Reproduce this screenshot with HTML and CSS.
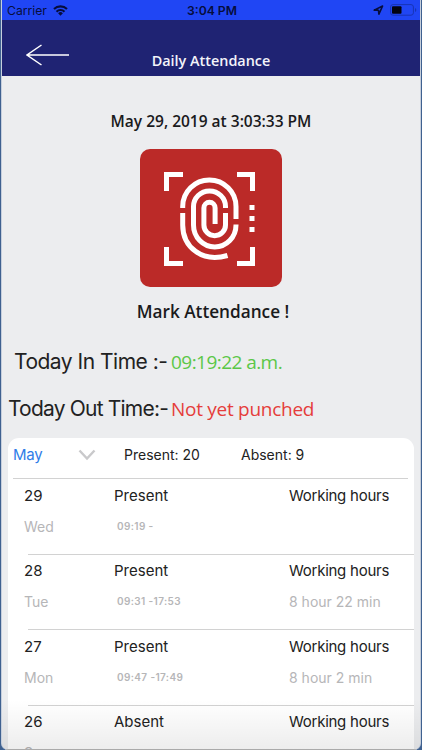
FILE: index.html
```html
<!DOCTYPE html>
<html lang="en">
<head>
  <meta charset="UTF-8">
  <meta name="viewport" content="width=device-width, initial-scale=1.0">
  <title>Daily Attendance</title>
  <link rel="stylesheet" href="styles.css">
</head>
<body>
  <div class="phone">
    <div class="statusbar">
      <div class="carrier">
        <span>Carrier</span>
        <svg width="15" height="11" viewBox="0 0 15 11">
          <path d="M1 4.100a9.200 9.200 0 0 1 13 0M3.500 6.700a5.700 5.700 0 0 1 8 0" fill="none" stroke="#060d3c" stroke-width="2.100"/>
          <path d="M5.100 8.300a3.400 3.400 0 0 1 4.800 0L7.500 10.800z" fill="#060d3c"/>
        </svg>
      </div>
      <div class="clock">3:04 PM</div>
      <div class="battery">
        <svg width="11" height="10" viewBox="0 0 11 10">
          <path d="M1.200 5.100L9.600 1 5.900 9.100 5.500 5.300z" fill="none" stroke="#060d3c" stroke-width="1.600" stroke-linejoin="round"/>
        </svg>
        <svg width="27" height="12" viewBox="0 0 27 12">
          <rect x=".6" y=".6" width="22.800" height="10.600" rx="2.400" fill="none" stroke="#1734b5"/>
          <rect x="2" y="2.200" width="9.500" height="7.600" rx="1" fill="#02030f"/>
          <path d="M25 4v4q1.300-.7 1.300-2T25 4" fill="#1734b5"/>
        </svg>
      </div>
    </div>

    <div class="header">
      <svg class="back" width="44" height="22" viewBox="0 0 44 22">
        <path d="M43 11H1M15.500 1L1 11l14.500 10" fill="none" stroke="#fff" stroke-width="1.500"/>
      </svg>
      <h1>Daily Attendance</h1>
    </div>

    <div class="punch">
      <div class="date">May 29, 2019 at 3:03:33 PM</div>
      <svg class="finger" width="142" height="138" viewBox="0 0 142 138">
        <rect width="142" height="138" rx="10" fill="#bb2a28"/>
        <g fill="none" stroke="#fff" stroke-width="5">
          <path d="M26.500 42V25.500H43M97 25.500h15.500V42M26.500 98v16.500H43M97 114.500h15.500V98"/>
          <path d="M42.700 59V57.500a26.650 26.500 0 0 1 53.300 0V70"/>
          <path d="M42.700 64V76C42.700 98 62 114 87.500 106.500"/>
          <path d="M85.500 59V57.500a16 15.500 0 0 0-32 0V76a21.250 22 0 0 0 42.500 0V75.500"/>
          <path d="M85.500 64V76a10.800 10.700 0 0 1-21.600 0V59a5.600 5.700 0 0 1 11.200 0V75"/>
        </g>
        <path d="M109.500 56h5v5h-5zM109.500 67h5v5h-5zM109.500 78h5v5h-5z" fill="#fff"/>
      </svg>
      <div class="mark">Mark Attendance !</div>
    </div>

    <div class="times">
      <div class="time"><span class="label in-label">Today In Time :-</span><span class="in">09:19:22 a.m.</span></div>
      <div class="time"><span class="label out-label">Today Out Time:-</span><span class="out">Not yet punched</span></div>
    </div>

    <div class="panel">
      <div class="summary">
        <span class="month">May</span>
        <svg width="18" height="12" viewBox="0 0 18 12">
          <path d="M1.500 1.500L9 9.500l7.500-8" fill="none" stroke="#c9c9cb" stroke-width="2.400"/>
        </svg>
        <span>Present: 20</span>
        <span>Absent: 9</span>
      </div>
      <div class="row">
        <span>29</span><span>Present</span><span class="wh">Working hours</span>
        <span class="sub">Wed</span><span class="range">09:19 -</span>
      </div>
      <div class="row">
        <span>28</span><span>Present</span><span class="wh">Working hours</span>
        <span class="sub">Tue</span><span class="range">09:31 -17:53</span><span class="sub">8 hour 22 min</span>
      </div>
      <div class="row">
        <span>27</span><span>Present</span><span class="wh">Working hours</span>
        <span class="sub">Mon</span><span class="range">09:47 -17:49</span><span class="sub">8 hour 2 min</span>
      </div>
      <div class="row">
        <span>26</span><span>Absent</span><span class="wh">Working hours</span>
        <span class="sub">Sun</span>
      </div>
    </div>
    <div class="fade"></div>
  </div>
</body>
</html>
```
FILE: styles.css
```css
* {
  box-sizing: border-box;
}

body {
  margin: 0;
  background: #3f6190;
  font-family: Inter, "Liberation Sans", sans-serif;
  color: #222;
}

.phone {
  position: relative;
  height: 750px;
  margin: 0 1px;
  border-left: 1px solid #c6cfdd;
  border-right: 1px solid #c6cfdd;
  background: #ecedef;
  border-radius: 0 0 7px 7px;
  overflow: hidden;
  white-space: nowrap;
}

.statusbar {
  display: grid;
  grid-template-columns: 1fr 60px 1fr;
  align-items: center;
  height: 20px;
  padding: 0 3px 0 5px;
  background: #2046f4;
  color: #060d3c;
  font-size: 12.2px;
}

.carrier,
.battery {
  display: flex;
  align-items: center;
  gap: 6px;
}

.battery {
  justify-content: flex-end;
}

.clock {
  font-weight: 600;
  text-align: center;
}

.header {
  height: 56px;
  background: #1f2373;
  display: grid;
  grid-template-columns: 1fr 120px 1fr;
}

.back {
  margin: 24px 0 0 24px;
}

h1 {
  margin: 28px 0 0;
  font: 600 14.4px/26px "Open Sans", sans-serif;
  color: #f4f4fa;
  text-align: center;
}

.punch {
  display: flex;
  flex-direction: column;
  align-items: center;
  font-family: "Open Sans", sans-serif;
  font-weight: 600;
  color: #1a1a1c;
}

.date {
  margin-top: 33px;
  font-size: 15.5px;
  line-height: 24px;
}

.finger {
  display: block;
  margin-top: 16px;
}

.mark {
  margin: 12px 0 0 4px;
  font-size: 17.2px;
  line-height: 26px;
}

.times {
  padding-top: 24px;
}

.time {
  display: flex;
  height: 47px;
  font-size: 21px;
  line-height: 26px;
}

.label {
  width: 169px;
}

.in-label {
  padding-left: 12px;
  letter-spacing: -.5px;
}

.out-label {
  padding-left: 6px;
  letter-spacing: -.8px;
}

.in,
.out {
  font-family: "Open Sans", sans-serif;
  font-size: 19px;
  line-height: 27px;
}

.in {
  color: #5bc747;
  letter-spacing: -.55px;
}

.out {
  color: #e53d3b;
  letter-spacing: -.28px;
}

.panel {
  height: 330px;
  margin: -5px 6px 0;
  background: #fff;
  border-radius: 11px 11px 0 0;
}

.summary {
  display: grid;
  grid-template-columns: 65px 46px 117px 1fr;
  align-items: center;
  height: 41px;
  margin: 0 6px 0 5px;
  padding-bottom: 7px;
  border-bottom: 1px solid #d2d2d2;
  font-size: 14px;
}

.month {
  color: #2f7de8;
  font-size: 15px;
  letter-spacing: -.3px;
}

.row {
  display: grid;
  grid-template-columns: 90px 175px 1fr;
  grid-template-rows: 31px 31px;
  height: 75.5px;
  margin-left: 20px;
  padding-top: .6px;
  border-bottom: 1px solid #d2d2d2;
  font-size: 15px;
  line-height: 31px;
}

.row span {
  margin-left: -4px;
}

.row .wh {
  letter-spacing: -.25px;
}

.row .sub {
  color: #b6b6b8;
  font-size: 14px;
}

.row .range {
  padding-left: 3px;
  color: #b6b6b8;
  font-size: 10px;
  font-weight: 600;
  letter-spacing: .38px;
}

.fade {
  position: absolute;
  left: 0;
  right: 0;
  bottom: 0;
  height: 50px;
  background: linear-gradient(rgba(0, 0, 0, 0), rgba(0, 0, 0, .07));
  border-bottom: 1px solid #aaa;
}
```
